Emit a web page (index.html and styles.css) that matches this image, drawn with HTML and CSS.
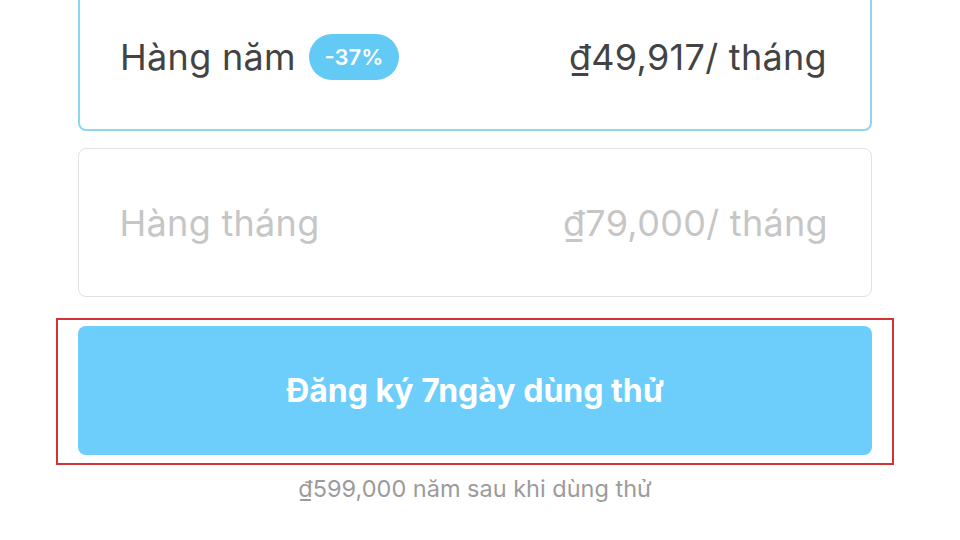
FILE: index.html
```html
<!DOCTYPE html>
<html lang="vi">
<head>
<meta charset="utf-8">
<link rel="stylesheet" href="styles.css">
</head>
<body>
<main class="page">
  <div class="plan plan-active">
    <div class="plan-left">
      <span class="plan-name">Hàng năm</span>
      <span class="badge">-37%</span>
    </div>
    <span class="plan-price">₫49,917/ tháng</span>
  </div>
  <div class="plan plan-muted">
    <div class="plan-left">
      <span class="plan-name">Hàng tháng</span>
    </div>
    <span class="plan-price">₫79,000/ tháng</span>
  </div>
  <div class="highlight">
    <button class="cta">Đăng ký 7ngày dùng thử</button>
  </div>
  <p class="note">₫599,000 năm sau khi dùng thử</p>
</main>
</body>
</html>
```

FILE: styles.css
```css
html, body {
  margin: 0;
  padding: 0;
  background: #ffffff;
}
body {
  font-family: Inter, "Noto Sans", "Liberation Sans", sans-serif;
  width: 960px;
  height: 540px;
  overflow: hidden;
}
.page {
  width: 794px;
  margin-left: 78px;
  display: flex;
  flex-direction: column;
}
.plan {
  box-sizing: border-box;
  height: 149px;
  border-radius: 8px;
  display: flex;
  align-items: center;
  justify-content: space-between;
  padding: 0 43px 0 40px;
}
.plan-active {
  margin-top: -18px;
  border: 2px solid #8fd6f2;
  color: #434343;
}
.plan-muted {
  margin-top: 17px;
  border: 1.5px solid #e2e2e2;
  color: #c6c6c6;
  padding-left: 40.5px;
}
.plan-left {
  display: flex;
  align-items: center;
  gap: 13px;
}
.plan-name,
.plan-price {
  font-size: 36px;
  font-weight: 400;
  letter-spacing: 0.3px;
}
.badge {
  display: inline-flex;
  align-items: center;
  justify-content: center;
  width: 90px;
  height: 46px;
  border-radius: 23px;
  background: #63c9f5;
  color: #ffffff;
  font-size: 22px;
  font-weight: 600;
  letter-spacing: 0;
}
.highlight {
  margin: 21px -22px 0;
  border: 2px solid #d23434;
  padding: 6px 20px 8px;
  display: flex;
}
.cta {
  flex: 1;
  height: 129px;
  border: none;
  border-radius: 8px;
  background: #6dcefb;
  color: #ffffff;
  font-family: inherit;
  font-size: 32px;
  font-weight: 700;
  padding: 0;
  cursor: pointer;
}
.note {
  margin: 9px 0 0;
  text-align: center;
  font-size: 23.5px;
  color: #9b9b9b;
}
```
